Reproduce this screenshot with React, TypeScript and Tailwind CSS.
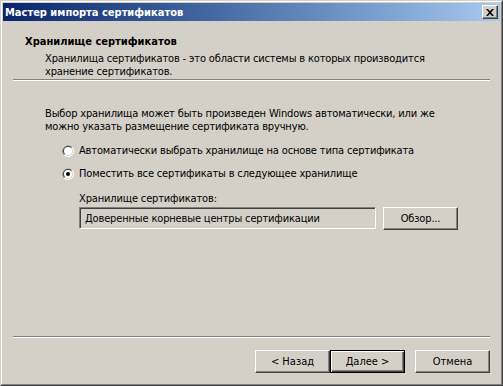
import React from "react";

const font = "font-['DejaVu_Sans_Condensed','DejaVu_Sans',sans-serif] text-[11px] leading-[13px]";

function Radio({ checked }: { checked?: boolean }) {
  return (
    <svg width="12" height="12" viewBox="0 0 12 12" className="shrink-0">
      <circle cx="6" cy="6" r="6" fill="#ffffff" />
      <path d="M1.76 10.24 A6 6 0 0 1 10.24 1.76 Z" fill="#808080" />
      <circle cx="6" cy="6" r="5" fill="#d4d0c8" />
      <path d="M2.46 9.54 A5 5 0 0 1 9.54 2.46 Z" fill="#404040" />
      <circle cx="6" cy="6" r="4" fill="#ffffff" />
      {checked && <circle cx="6" cy="6" r="2" fill="#000000" />}
    </svg>
  );
}

function Button({ label, isDefault }: { label: string; isDefault?: boolean }) {
  if (isDefault) {
    return (
      <div className="w-[75px] h-[23px] border border-black bg-[#d4d0c8] shadow-[inset_1px_1px_#ffffff,inset_-1px_-1px_#404040,inset_-2px_-2px_#808080] flex items-center justify-center">
        {label}
      </div>
    );
  }
  return (
    <div className="w-[75px] h-[23px] border border-t-white border-l-white border-b-[#404040] border-r-[#404040] bg-[#d4d0c8] shadow-[inset_-1px_-1px_#808080] flex items-center justify-center">
      {label}
    </div>
  );
}

function Separator() {
  return (
    <div className="mx-[10px]">
      <div className="h-px bg-[#808080]" />
      <div className="h-px bg-white" />
    </div>
  );
}

export default function App() {
  return (
    <div className={`w-[503px] h-[386px] bg-[#d4d0c8] text-black ${font} border border-t-[#d4d0c8] border-l-[#d4d0c8] border-b-[#404040] border-r-[#404040] flex`}>
      <div className="flex-1 flex flex-col border border-t-white border-l-white border-b-[#808080] border-r-[#808080] p-px">
        {/* title bar */}
        <div className="h-[18px] shrink-0 bg-gradient-to-r from-[#0a246a] to-[#a6caf0] flex items-center justify-between pl-[2px] pr-[2px]">
          <span className="text-white font-bold">Мастер импорта сертификатов</span>
          <div className="w-[16px] h-[14px] border border-t-white border-l-white border-b-[#404040] border-r-[#404040] bg-[#d4d0c8] shadow-[inset_-1px_-1px_#808080] flex items-center justify-center">
            <svg width="8" height="7" viewBox="0 0 8 7">
              <path d="M0 0h2l2 2.2L6 0h2L5 3.5 8 7H6L4 4.8 2 7H0l3-3.5z" fill="#000" />
            </svg>
          </div>
        </div>

        {/* header */}
        <div className="pt-[14px] shrink-0">
          <div className="pl-[22px] font-bold">Хранилище сертификатов</div>
          <div className="pl-[42px] mt-[4px] tracking-[-0.15px]">
            Хранилища сертификатов - это области системы в которых производится
            <br />
            хранение сертификатов.
          </div>
          <div className="mt-px">
            <Separator />
          </div>
        </div>

        {/* body */}
        <div className="flex-1 pl-[42px] pt-[26px] tracking-[-0.15px]">
          <div>
            Выбор хранилища может быть произведен Windows автоматически, или же
            <br />
            можно указать размещение сертификата вручную.
          </div>
          <div className="pl-[17px] mt-[11px] flex flex-col gap-[10px]">
            <div className="h-[13px] flex items-center gap-[5px]">
              <Radio />
              <span>Автоматически выбрать хранилище на основе типа сертификата</span>
            </div>
            <div className="h-[13px] flex items-center gap-[5px]">
              <Radio checked />
              <span>Поместить все сертификаты в следующее хранилище</span>
            </div>
          </div>
          <div className="pl-[34px] mt-[12px]">
            <div>Хранилище сертификатов:</div>
            <div className="mt-[2px] flex gap-[7px]">
              <div className="w-[297px] h-[22px] border border-t-[#808080] border-l-[#808080] border-b-white border-r-white shadow-[inset_1px_1px_#404040,inset_-1px_-1px_#d4d0c8] flex items-center pl-[5px]">
                Доверенные корневые центры сертификации
              </div>
              <Button label="Обзор..." />
            </div>
          </div>
        </div>

        {/* footer */}
        <div className="shrink-0">
          <Separator />
          <div className="mt-[12px] pb-[10px] pr-[10px] flex justify-end">
            <Button label="< Назад" />
            <Button label="Далее >" isDefault />
            <div className="ml-[10px]">
              <Button label="Отмена" />
            </div>
          </div>
        </div>
      </div>
    </div>
  );
}
